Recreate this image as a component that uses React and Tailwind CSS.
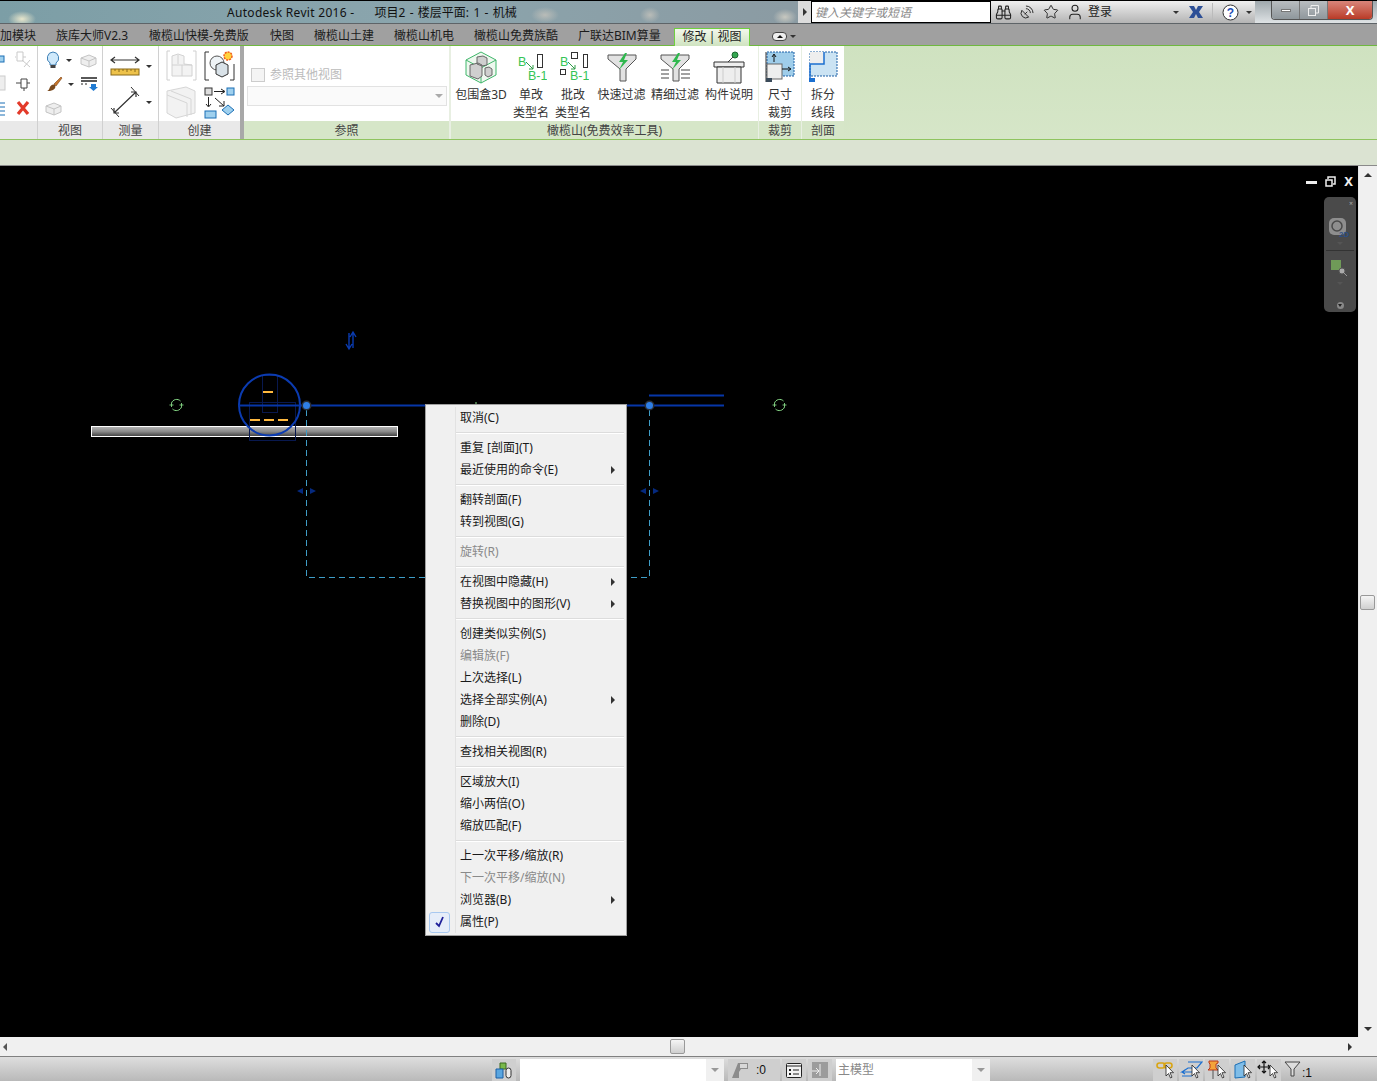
import { Binoculars, SatelliteDish, Star, User } from 'lucide-react';

const TABS = [
  { t: '加模块', w: 36 },
  { t: '族库大师V2.3', w: 73 },
  { t: '橄榄山快模-免费版', w: 101 },
  { t: '快图', w: 24 },
  { t: '橄榄山土建', w: 60 },
  { t: '橄榄山机电', w: 60 },
  { t: '橄榄山免费族酷', w: 84 },
  { t: '广联达BIM算量', w: 84 },
];

const MENU = [
  { t: '取消(C)' },
  null,
  { t: '重复 [剖面](T)' },
  { t: '最近使用的命令(E)', sub: true },
  null,
  { t: '翻转剖面(F)' },
  { t: '转到视图(G)' },
  null,
  { t: '旋转(R)', off: true },
  null,
  { t: '在视图中隐藏(H)', sub: true },
  { t: '替换视图中的图形(V)', sub: true },
  null,
  { t: '创建类似实例(S)' },
  { t: '编辑族(F)', off: true },
  { t: '上次选择(L)' },
  { t: '选择全部实例(A)', sub: true },
  { t: '删除(D)' },
  null,
  { t: '查找相关视图(R)' },
  null,
  { t: '区域放大(I)' },
  { t: '缩小两倍(O)' },
  { t: '缩放匹配(F)' },
  null,
  { t: '上一次平移/缩放(R)' },
  { t: '下一次平移/缩放(N)', off: true },
  { t: '浏览器(B)', sub: true },
  { t: '属性(P)', checked: true },
];

function Caret({ className = '' }) {
  return <span className={`w-0 h-0 border-x-[3px] border-x-transparent border-t-[3px] border-t-[#333] ${className}`} />;
}

function Bulb() {
  return (
    <svg width="16" height="18" viewBox="0 0 16 18">
      <path d="M8 1a6 6 0 0 0-3 11v2h6v-2A6 6 0 0 0 8 1z" fill="#cfe9fb" stroke="#3d7fb5" />
      <rect x="5.500" y="14" width="5" height="3" fill="#444" />
    </svg>
  );
}

function Brush() {
  return (
    <svg width="18" height="16" viewBox="0 0 18 16">
      <path d="M9 8 16 1l1 1-6 8z" fill="#c9772a" stroke="#7a4315" strokeWidth=".6" />
      <path d="M1 15c3 0 3-2 4-4s3-3 5-2c1 2 0 4-2 5s-4 1-7 1z" fill="#7a4a1e" />
    </svg>
  );
}

function GrayBox({ w = 17, h = 16 }) {
  return (
    <svg width={w} height={h} viewBox="0 0 17 16">
      <path d="M1 6 9 3l7 3v6l-7 3-8-3z" fill="#eee" stroke="#c4c4c4" />
      <path d="M1 6l8 3 7-3M9 9v6" fill="none" stroke="#c4c4c4" />
    </svg>
  );
}

function PanelOneIcons() {
  return (
    <div className="w-[37px] h-[75px] grid grid-cols-[15px_22px] grid-rows-[25px_25px_25px] items-center overflow-hidden">
      <svg width="6" height="20" viewBox="0 0 6 20"><rect x="-3" y="7" width="7" height="6" fill="#9fd0ee" stroke="#1b6fb5" /></svg>
      <svg width="17" height="20" viewBox="0 0 17 20"><path d="M2 3h6v9H2zM1 8H0M8 8h3M7 11l8 7M15 11l-6 7" fill="none" stroke="#c9c9c9" /></svg>
      <svg width="6" height="22" viewBox="0 0 6 22"><rect x="-3" y="3" width="8" height="14" fill="#eee" stroke="#ccc" /></svg>
      <svg width="17" height="20" viewBox="0 0 17 20"><path d="M6 5h6v9H6zM1 9h5M12 9h3M9 14v3" fill="none" stroke="#444" /></svg>
      <svg width="6" height="20" viewBox="0 0 6 20"><path d="M0 4h5M0 8h5M0 12h5M0 16h5" stroke="#1b6fb5" /></svg>
      <svg width="17" height="20" viewBox="0 0 17 20"><path d="M3 3l10 12M13 3 3 15" stroke="#e33a2a" strokeWidth="3.2" /></svg>
    </div>
  );
}

function ViewIcons() {
  return (
    <div className="w-[64px] h-[75px] grid grid-cols-[35px_22px] grid-rows-[24px_24px_24px] items-center pl-[7px] pt-[2px]">
      <div className="flex items-center gap-[5px]"><Bulb /><Caret /></div>
      <GrayBox />
      <div className="flex items-center gap-[5px]"><Brush /><Caret /></div>
      <svg width="18" height="18" viewBox="0 0 18 18">
        <path d="M1 3h16M1 6h16" stroke="#222" strokeWidth="1.3" />
        <path d="M1 9h8" stroke="#222" strokeDasharray="2 2" />
        <path d="M11 9h5v3h2l-4.500 4L9 12h2z" fill="#1f7ad1" />
      </svg>
      <GrayBox />
    </div>
  );
}

function MeasureIcons() {
  return (
    <div className="w-[55px] h-[75px] flex flex-col pl-[7px] pt-[9px] gap-[9px]">
      <div className="flex items-center gap-[6px]">
        <svg width="30" height="22" viewBox="0 0 30 22">
          <path d="M2 5h26M5 2 1 5l4 3M25 2l4 3-4 3" fill="none" stroke="#333" strokeWidth="1.200" />
          <rect x="1" y="14" width="28" height="6" fill="#eec24a" stroke="#8a6a1a" />
          <path d="M5 14v2M9 14v3M13 14v2M17 14v3M21 14v2M25 14v3" stroke="#8a6a1a" />
        </svg>
        <Caret />
      </div>
      <div className="flex items-center gap-[6px]">
        <svg width="30" height="32" viewBox="0 0 30 32">
          <path d="M4 27 26 6M21 6h5v5M4 22v5h5" fill="none" stroke="#333" strokeWidth="1.200" />
          <path d="M21 1l8 9M1 22l8 9" stroke="#333" />
        </svg>
        <Caret />
      </div>
    </div>
  );
}

function CreateIcons() {
  return (
    <div className="w-[81px] h-[75px] grid grid-cols-[38px_31px] grid-rows-[35px_34px] gap-y-[1px] pl-[7px] pt-[4px]">
      <svg width="31" height="31" viewBox="0 0 31 31">
        <path d="M4 1H1v29h3M27 1h3v29h-3" fill="none" stroke="#cfcfcf" />
        <path d="M6 14V6l6-2 6 2v8l8 1v11H6z" fill="#f3f3f3" stroke="#d2d2d2" />
        <path d="M6 15h20M16 15v11M12 5v9" stroke="#d2d2d2" />
      </svg>
      <svg width="31" height="31" viewBox="0 0 31 31">
        <path d="M5 2H1v28h4M26 30h4V14" fill="none" stroke="#333" />
        <circle cx="13" cy="13" r="7" fill="#eef3f6" stroke="#555" />
        <path d="M12 15l6-3 6 3v9l-6 3-6-3z" fill="#d9e2e8" stroke="#333" />
        <circle cx="24" cy="6" r="4" fill="#ffd23c" stroke="#f05a1c" strokeWidth="1.500" strokeDasharray="2 1" />
      </svg>
      <svg width="31" height="33" viewBox="0 0 31 33">
        <path d="M1 5 20 1l9 4v22L10 32 1 27z" fill="#f2f2f2" stroke="#d6d6d6" />
        <path d="M1 9l20 8v14M5 5l20 8v16" fill="none" stroke="#d6d6d6" />
      </svg>
      <svg width="31" height="33" viewBox="0 0 31 33">
        <rect x="1" y="2" width="7" height="7" fill="#ddd" stroke="#333" />
        <path d="M10 5.500h10M17 3l4 2.500L17 8" fill="none" stroke="#222" />
        <rect x="23" y="2" width="7" height="7" fill="#9fd0ee" stroke="#1b6fb5" />
        <path d="M4.500 11v9M2 18l2.500 3L7 18" fill="none" stroke="#222" />
        <path d="M11 12l9 8M20 15v5h-5" fill="none" stroke="#222" />
        <rect x="1" y="25" width="11" height="7" fill="#9fd0ee" stroke="#1b6fb5" />
        <path d="M24 19l6 5-6 5-6-5z" fill="#9fd0ee" stroke="#1b6fb5" />
      </svg>
    </div>
  );
}

function BoxIcon() {
  return (
    <svg width="32" height="33" viewBox="0 0 32 33">
      <path d="M16 1l15 8v15l-15 8-15-8V9z" fill="#eef8ef" stroke="#3fb66a" />
      <path d="M1 9l15 8 15-8M16 17v15" fill="none" stroke="#3fb66a" />
      <path d="M5 14l8-2 4 2v11l-4 3-8-3zM12 6l6-1 4 2v7l-5 1-5-2zM20 17l4-1 3 2v6l-4 2-3-2z" fill="#cfcfcf" stroke="#666" />
    </svg>
  );
}

function RenameIcon({ batch }) {
  return (
    <svg width="32" height="33" viewBox="0 0 32 33">
      <text x="3" y="15" fontSize="12.500" fill="#35c455" fontFamily="Liberation Sans">B</text>
      <path d="M11 11l7 7M14 18h4v-4" fill="none" stroke="#2d9a45" />
      <rect x={batch ? 26.5 : 22.5} y="3.500" width={batch ? 4 : 5} height="13" fill="#fff" stroke="#333" />
      {batch && <rect x="14.500" y="1.500" width="6" height="6" fill="#fff" stroke="#333" />}
      {batch && <rect x="3.500" y="18.500" width="5" height="5" fill="#fff" stroke="#333" />}
      <text x="13" y="29" fontSize="12.500" fill="#35c455" fontFamily="Liberation Sans">B-1</text>
    </svg>
  );
}

function FunnelIcon({ lines }) {
  return (
    <svg width="30" height="30" viewBox="0 0 30 30">
      <path d="M1 3h28v4L19 17v12h-6V17L1 7z" fill="#e2e2e2" stroke="#555" />
      <path d="M18 1l-6 9h4l-4 8 9-10h-4l3-7z" fill="#2fb84e" />
      {lines && <path d="M1 18h8M1 22h8M1 26h8M21 18h9M21 22h9M21 26h9" stroke="#444" />}
    </svg>
  );
}

function PodiumIcon() {
  return (
    <svg width="32" height="33" viewBox="0 0 32 33">
      <circle cx="22" cy="4" r="3" fill="#36a852" stroke="#1c6a30" />
      <path d="M20 6l-6 6" stroke="#444" />
      <path d="M1 11h30v5H1z" fill="#eee" stroke="#333" />
      <path d="M4 16h24v16H4z" fill="#eee" stroke="#333" />
      <path d="M10 16v16M22 16v16" stroke="#ccc" />
    </svg>
  );
}

function CropIcon() {
  return (
    <svg width="30" height="32" viewBox="0 0 30 32">
      <rect x="2" y="1" width="27" height="24" fill="#9fcdea" stroke="#1b5fa5" strokeDasharray="2 1" />
      <rect x="2" y="13" width="15" height="15" fill="#eee" stroke="#666" />
      <path d="M9 11V4M7 6l2-3 2 3M17 18h8M23 16l3 2-3 2" fill="none" stroke="#111" />
      <path d="M1 1v30" stroke="#333" />
      <rect x="1" y="27" width="6" height="4" fill="#3a4a5a" />
    </svg>
  );
}

function SplitIcon() {
  return (
    <svg width="30" height="32" viewBox="0 0 30 32">
      <path d="M2 1h27v24H2z" fill="#cbe3f3" stroke="#1b5fa5" strokeDasharray="2 1" />
      <path d="M2 1h14v12H2z" fill="#eee" />
      <path d="M16 1v12H2v17" fill="none" stroke="#1b6fd0" strokeWidth="1.500" />
      <rect x="1" y="27" width="6" height="4" fill="#1b6fd0" />
    </svg>
  );
}

function BigButton({ w, icon, lines }) {
  return (
    <div className="flex flex-col items-center pt-[3px]" style={{ width: w }}>
      <div className="h-[36px] shrink-0 flex items-center justify-center">{icon}</div>
      <div className="shrink-0 mt-[1px] flex flex-col items-center leading-[18px] text-[#333] whitespace-nowrap">
        {lines.map(l => <span key={l}>{l}</span>)}
      </div>
    </div>
  );
}

function Panel({ w, label, green, children }) {
  return (
    <div className="flex flex-col h-[93px]" style={{ width: w }}>
      <div className="h-[75px] flex bg-white overflow-hidden">{children}</div>
      <div className={`h-[18px] pt-[1px] leading-[18px] text-center text-[#444] ${green ? 'bg-[#d6e6c8]' : 'bg-[#e9e9e9]'}`}>{label}</div>
    </div>
  );
}

function TitleBar() {
  return (
    <div className="h-[24px] flex border-b border-[#5e6468] border-t border-t-black bg-[radial-gradient(ellipse_14px_8px_at_22px_18px,#e8e6cc,transparent),radial-gradient(ellipse_14px_8px_at_545px_14px,#b9bcb8,transparent),radial-gradient(ellipse_10px_8px_at_650px_14px,#b9bcb8,transparent),radial-gradient(ellipse_12px_8px_at_785px_16px,#c8c8c0,transparent),linear-gradient(90deg,#7c9ea6_0%,#8ba5ad_30%,#8b9aa2_60%,#6d7b88_100%)]">
      <div className="w-[798px] pl-[227px] pt-[1px] flex items-center text-[#111] gap-[20px] whitespace-nowrap">
        <span className="tracking-[0.3px]">Autodesk Revit 2016 -</span>
        <span className="[word-spacing:1.2px]">项目2 - 楼层平面: 1 - 机械</span>
      </div>
      <div className="w-[13px] bg-[#dcdcdc] flex items-center justify-center">
        <span className="w-0 h-0 border-y-[4px] border-y-transparent border-l-[4px] border-l-[#333]" />
      </div>
      <div className="w-[180px] bg-white border border-black pl-[3px] pt-[1px] flex items-center italic text-[#888] whitespace-nowrap">键入关键字或短语</div>
      <div className="w-[264px] flex items-center pl-[4px] bg-gradient-to-b from-[#f0f0f0] to-[#b4b4b4] text-[#222]">
        <Binoculars size={17} strokeWidth={1.5} />
        <SatelliteDish size={16} strokeWidth={1.4} className="ml-[7px]" />
        <Star size={16} strokeWidth={1.4} className="ml-[8px]" />
        <User size={18} strokeWidth={1.4} className="ml-[7px]" />
        <span className="ml-[4px]">登录</span>
        <Caret className="ml-[61px]" />
        <svg className="ml-[9px]" width="16" height="14" viewBox="0 0 16 14">
          <path d="M1 1h5l2 4 2-4h5l-4 6 4 6h-5L8 9l-2 4H1l4-6z" fill="#2d4f96" />
        </svg>
        <span className="ml-[8px] w-px h-[18px] bg-[#bbb]" />
        <svg className="ml-[9px]" width="17" height="17" viewBox="0 0 17 17">
          <circle cx="8.500" cy="8.500" r="7.500" fill="#fff" stroke="#333" />
          <text x="8.500" y="13" fontSize="12" fontWeight="700" textAnchor="middle" fill="#1f4fb5" fontFamily="Liberation Sans">?</text>
        </svg>
        <Caret className="ml-[7px]" />
      </div>
      <div className="flex-1 pl-[16px] bg-gradient-to-b from-[#9fa8ad] to-[#dfe3e5]">
        <div className="w-[102px] h-[19px] flex rounded-b-[4px] border border-t-0 border-[#555] overflow-hidden">
          <div className="w-[28px] flex items-center justify-center bg-gradient-to-b from-[#b9bdc0] to-[#8f979c] border-r border-[#777]"><span className="w-[10px] h-[3px] bg-white border border-[#777]" /></div>
          <div className="w-[28px] flex items-center justify-center bg-gradient-to-b from-[#b9bdc0] to-[#8f979c] border-r border-[#777]">
            <svg width="11" height="11" viewBox="0 0 11 11"><path d="M3 3V.5h7.500V8H8" fill="none" stroke="#eee" /><rect x=".5" y="3.500" width="7" height="7" fill="none" stroke="#eee" /></svg>
          </div>
          <div className="flex-1 flex items-center justify-center bg-gradient-to-b from-[#d8857a] to-[#b93a26] text-white font-bold text-[13px] leading-none">X</div>
        </div>
      </div>
    </div>
  );
}

function TabRow() {
  return (
    <div className="h-[22px] flex items-end bg-[#a0a0a0] border-b border-[#6fb83f] whitespace-nowrap text-[#1c1c1c]">
      <div className="flex gap-[20px] h-[21px] pt-[2px] items-center">
        {TABS.map(tab => <span key={tab.t} style={{ width: tab.w }}>{tab.t}</span>)}
      </div>
      <div className="ml-[12px] w-[76px] h-[18px] mb-[-1px] text-center leading-[16px] [word-spacing:-1px] border border-b-0 border-[#6fd03f] bg-gradient-to-b from-[#f3f8ec] to-[#cfe3c0]">修改 | 视图</div>
      <div className="ml-[22px] mb-[4px] flex items-center gap-[3px]">
        <span className="w-[15px] h-[9px] rounded-[4px] bg-[#eee] border border-[#444] flex items-center justify-center">
          <span className="w-0 h-0 border-x-[3px] border-x-transparent border-b-[3px] border-b-[#111]" />
        </span>
        <Caret />
      </div>
    </div>
  );
}

function Ribbon() {
  return (
    <div className="h-[93px] flex bg-gradient-to-b from-[#cfe2c0] to-[#d6e6c8]">
      <Panel w={37} label=""><PanelOneIcons /></Panel>
      <div className="w-px bg-[#d0d0d0]" />
      <Panel w={64} label="视图"><ViewIcons /></Panel>
      <div className="w-px bg-[#d0d0d0]" />
      <Panel w={55} label="测量"><MeasureIcons /></Panel>
      <div className="w-px bg-[#d0d0d0]" />
      <Panel w={81} label="创建"><CreateIcons /></Panel>
      <div className="w-[4px] bg-[#a8a8a8]" />
      <Panel w={205} label="参照" green>
        <div className="w-full pt-[21px] pl-[3px] pr-[2px]">
          <div className="flex items-center pl-[4px] h-[16px] gap-[5px] text-[#bbb]">
            <span className="w-[14px] h-[14px] border border-[#ccc] bg-[#f4f4f4]" />
            <span>参照其他视图</span>
          </div>
          <div className="mt-[3px] h-[20px] border border-[#e2e2e2] bg-[#fafafa] flex items-center justify-end pr-[3px]">
            <span className="w-0 h-0 border-x-[4px] border-x-transparent border-t-[4px] border-t-[#aaa]" />
          </div>
        </div>
      </Panel>
      <div className="w-[2px] bg-[#e8efe2]" />
      <Panel w={307} label="橄榄山(免费效率工具)" green>
        <BigButton w={60} icon={<BoxIcon />} lines={['包围盒3D']} />
        <BigButton w={40} icon={<RenameIcon />} lines={['单改', '类型名']} />
        <BigButton w={44} icon={<RenameIcon batch />} lines={['批改', '类型名']} />
        <BigButton w={53} icon={<FunnelIcon />} lines={['快速过滤']} />
        <BigButton w={54} icon={<FunnelIcon lines />} lines={['精细过滤']} />
        <BigButton w={54} icon={<PodiumIcon />} lines={['构件说明']} />
      </Panel>
      <div className="w-px bg-[#e8efe2]" />
      <Panel w={42} label="裁剪" green>
        <BigButton w={42} icon={<CropIcon />} lines={['尺寸', '裁剪']} />
      </Panel>
      <div className="w-px bg-[#e8efe2]" />
      <Panel w={42} label="剖面" green>
        <BigButton w={42} icon={<SplitIcon />} lines={['拆分', '线段']} />
      </Panel>
    </div>
  );
}

function Rotate({ x, y }) {
  return (
    <g transform={`translate(${x} ${y})`} fill="none" stroke="#86d886">
      <path d="M-5-2a5.500 5.500 0 0 1 9-2M5 2a5.500 5.500 0 0 1-9 2" />
      <path d="M-7 0h4M-5-2v4M3 0h4M5-2v4" strokeWidth=".9" />
    </g>
  );
}

function Sketch() {
  return (
    <svg className="absolute left-0 top-0" width="1358" height="871" viewBox="0 166 1358 871">
      <defs>
        <linearGradient id="wall" x1="0" y1="0" x2="0" y2="1">
          <stop offset="0" stopColor="#b4b4b4" />
          <stop offset="0.5" stopColor="#8a8a8a" />
          <stop offset="1" stopColor="#3c3c3c" />
        </linearGradient>
      </defs>
      <rect x="91.500" y="426.500" width="306" height="10" fill="url(#wall)" stroke="#fff" />
      <rect x="262.500" y="375.500" width="15" height="37" fill="none" stroke="#08184e" />
      <rect x="249.500" y="402.500" width="46" height="38" fill="none" stroke="#08184e" />
      <circle cx="269.500" cy="405" r="30.500" fill="none" stroke="#0b3bb0" strokeWidth="2" />
      <path d="M238 405.500H724M649 395.500h75" stroke="#0636a8" strokeWidth="2" />
      <path d="M263 392h10M250 420h10M264 420h10M278 420h10" stroke="#ffb93f" strokeWidth="2" />
      <path d="M306.500 410V577.500H426M649.500 410V577.500H627" fill="none" stroke="#3f9dc6" strokeDasharray="6 4" />
      <circle cx="306.500" cy="405.500" r="5" fill="#2a2f38" />
      <circle cx="306.500" cy="405.500" r="3.500" fill="#2f7fe6" />
      <circle cx="649.500" cy="405.500" r="5" fill="#2a2f38" />
      <circle cx="649.500" cy="405.500" r="3.500" fill="#2f7fe6" />
      <path d="M303 488v6l-6-3zM310 488v6l6-3zM646 488v6l-6-3zM653 488v6l6-3z" fill="#05297e" />
      <path d="M349 333v15M346 344l3 5 3-5M353 348v-15M350 337l3-5 3 5" fill="none" stroke="#0a3bb0" strokeWidth="1.400" />
      <path d="M476 404v-2" stroke="#86d886" />
      <Rotate x={176.500} y={405} />
      <Rotate x={779.500} y={405} />
    </svg>
  );
}

function ViewControls() {
  return (
    <div className="absolute right-[2px] top-[7px] flex flex-col items-end">
      <div className="flex items-center gap-[8px] pr-[3px] h-[16px]">
        <span className="w-[11px] h-[3px] bg-[#eee] mt-[3px]" />
        <svg width="11" height="11" viewBox="0 0 11 11"><path d="M3 3V1h7v7H8" fill="none" stroke="#eee" strokeWidth="1.500" /><rect x="1" y="4" width="6" height="6" fill="none" stroke="#eee" strokeWidth="1.500" /></svg>
        <span className="text-[#eee] font-bold text-[13px] leading-none">X</span>
      </div>
      <div className="w-[32px] h-[115px] mt-[8px] rounded-[5px] bg-[#4a4a4a] flex flex-col items-center pt-[3px] text-[#aaa]">
        <span className="self-end pr-[3px] text-[7px] leading-[8px]">×</span>
        <svg className="mt-[9px]" width="24" height="22" viewBox="0 0 24 22">
          <rect x="1" y="1" width="17" height="17" rx="5" fill="#8e8e8e" />
          <circle cx="9" cy="9" r="5" fill="none" stroke="#4a4a4a" strokeWidth="1.500" />
          <text x="11" y="20" fontSize="8" fontWeight="700" fill="#2c4f86" fontFamily="Liberation Sans">2D</text>
        </svg>
        <span className="mt-[3px] w-0 h-0 border-x-[3px] border-x-transparent border-t-[3px] border-t-[#555]" />
        <span className="mt-[5px] w-[28px] h-px bg-[#333]" />
        <svg className="mt-[9px]" width="18" height="18" viewBox="0 0 18 18">
          <rect x="0" y="0" width="10" height="10" fill="#6f9a58" />
          <circle cx="11" cy="11" r="3" fill="#aaa" stroke="#555" />
          <path d="M13 13l3 3" stroke="#999" />
        </svg>
        <span className="mt-[4px] w-0 h-0 border-x-[3px] border-x-transparent border-t-[3px] border-t-[#555]" />
        <span className="mt-auto mb-[3px] w-[7px] h-[7px] rounded-full bg-[#888] flex items-center justify-center">
          <span className="w-0 h-0 border-x-[2px] border-x-transparent border-t-[3px] border-t-[#222]" />
        </span>
      </div>
    </div>
  );
}

function ContextMenu() {
  return (
    <div className="absolute left-[425px] top-[238px] w-[202px] py-[2px] border border-[#a0a0a0] bg-[#f0f0f0] text-[12px] text-[#1a1a1a]">
      {MENU.map((m, i) =>
        m === null ? (
          <div key={i} className="h-[8px] flex">
            <div className="w-[30px] h-full border-r border-[#e2e2e2]" />
            <div className="flex-1 mt-[3px] mr-[2px] h-[2px] bg-[#dcdcdc] border-b border-white" />
          </div>
        ) : (
          <div key={i} className="h-[22px] flex">
            <div className="w-[30px] h-full border-r border-[#e2e2e2] flex items-center pl-[3px]">
              {m.checked && (
                <span className="w-[21px] h-[21px] rounded-[3px] border border-[#a8c8f0] bg-[#e6edf9] flex items-center justify-center">
                  <svg width="10" height="12" viewBox="0 0 10 12"><path d="M1 7l3 3 4-9" fill="none" stroke="#20209a" strokeWidth="1.800" /></svg>
                </span>
              )}
            </div>
            <div className={`flex-1 pl-[4px] pr-[11px] flex items-center justify-between ${m.off ? 'text-[#8a8a8a]' : ''}`}>
              <span>{m.t}</span>
              {m.sub && <span className="w-0 h-0 border-y-[4px] border-y-transparent border-l-[4px] border-l-[#333]" />}
            </div>
          </div>
        )
      )}
    </div>
  );
}

function VScroll() {
  return (
    <div className="w-[19px] bg-[#f0f0f0] flex flex-col items-center border-l border-[#e6e6e6]">
      <span className="mt-[7px] w-0 h-0 border-x-[4px] border-x-transparent border-b-[4px] border-b-[#333]" />
      <div className="mt-[418px] mr-[2px] w-[15px] h-[15px] border border-[#999] rounded-[2px] bg-gradient-to-b from-[#f5f5f5] to-[#cfcfcf]" />
      <span className="mt-auto mb-[6px] w-0 h-0 border-x-[4px] border-x-transparent border-t-[4px] border-t-[#333]" />
    </div>
  );
}

function HScroll() {
  return (
    <div className="h-[20px] flex items-center bg-[#f0f0f0] border-b border-[#808080] pl-[3px]">
      <span className="w-0 h-0 border-y-[4px] border-y-transparent border-r-[4px] border-r-[#555]" />
      <div className="ml-[663px] w-[15px] h-[15px] border border-[#999] rounded-[2px] bg-gradient-to-b from-[#f5f5f5] to-[#cfcfcf]" />
      <span className="ml-[663px] w-0 h-0 border-y-[4px] border-y-transparent border-l-[4px] border-l-[#333]" />
    </div>
  );
}

function StatusBox({ w, className = '', children }) {
  return <div className={`h-[22px] flex items-center justify-center bg-[#cfcfcf] ${className}`} style={{ width: w }}>{children}</div>;
}

function Combo({ w, text }) {
  return (
    <div className="h-[22px] flex bg-white" style={{ width: w }}>
      <div className="flex-1 pl-[2px] flex items-center text-[#888]">{text}</div>
      <div className="w-[18px] bg-[#f0f0f0] flex items-center justify-center">
        <span className="w-0 h-0 border-x-[4px] border-x-transparent border-t-[4px] border-t-[#999]" />
      </div>
    </div>
  );
}

function Pointer() {
  return <path d="M13 6v11l2.500-2.500 2 4.500 1.500-.8-2-4.500h3.500z" fill="#fff" stroke="#222" strokeWidth=".8" />;
}

function StatusBar() {
  return (
    <div className="h-[24px] flex items-end pl-[492px] bg-gradient-to-b from-[#dedede] to-[#b9b9b9]">
      <StatusBox w={24}>
        <svg width="18" height="17" viewBox="0 0 18 17">
          <path d="M5 1h6v6H5z" fill="#79b84a" stroke="#3a6a20" />
          <path d="M1 7h7v9H1z" fill="#5aa6e0" stroke="#1b5fa5" />
          <rect x="11" y="6" width="5" height="10" rx="2.500" fill="#eee" stroke="#333" />
        </svg>
      </StatusBox>
      <div className="ml-[4px]"><Combo w={204} /></div>
      <StatusBox w={52} className="ml-[4px] gap-[8px] justify-start pl-[4px]">
        <svg width="16" height="17" viewBox="0 0 16 17">
          <path d="M6 1h10v6H9l-2 3v6H0z" fill="#8c8c8c" />
          <path d="M8 2h7v4H8z" fill="#d8d8d8" />
        </svg>
        <span className="text-[#111] font-['Liberation_Sans',sans-serif]">:0</span>
      </StatusBox>
      <StatusBox w={24} className="ml-[2px]">
        <svg width="16" height="15" viewBox="0 0 16 15">
          <rect x=".5" y=".5" width="15" height="14" rx="1" fill="#f4f4f4" stroke="#222" />
          <path d="M1 3h14" stroke="#222" />
          <path d="M3 6h2v2H3zM3 10h2v2H3z" fill="#222" />
          <path d="M7 7h6M7 11h6" stroke="#222" />
        </svg>
      </StatusBox>
      <StatusBox w={24} className="ml-[2px]">
        <svg width="16" height="16" viewBox="0 0 16 16">
          <rect width="16" height="16" fill="#9c9c9c" />
          <path d="M0 9h7M4 6l3 3-3 3M8 2v12" fill="none" stroke="#eee" />
        </svg>
      </StatusBox>
      <div className="ml-[4px]"><Combo w={154} text="主模型" /></div>
      <div className="ml-[163px] flex gap-[2px]">
        <StatusBox w={24}>
          <svg width="24" height="22" viewBox="0 0 24 22">
            <rect x="4" y="4" width="8" height="5" rx="2.500" fill="none" stroke="#d9a514" strokeWidth="1.600" />
            <rect x="11" y="4" width="8" height="5" rx="2.500" fill="none" stroke="#d9a514" strokeWidth="1.600" />
            <Pointer />
          </svg>
        </StatusBox>
        <StatusBox w={24}>
          <svg width="24" height="22" viewBox="0 0 24 22">
            <path d="M9 3h14l-5 6H9l-6 4h10M3 13l3-2M3 13l3 2M3 17h10" fill="none" stroke="#1b6fd0" strokeWidth="1.200" />
            <Pointer />
          </svg>
        </StatusBox>
        <StatusBox w={24}>
          <svg width="24" height="22" viewBox="0 0 24 22">
            <path d="M4 2h9v2l-2 1v4l2 2H3l2-2V5L4 4z" fill="#f3a33a" stroke="#b9381f" />
            <path d="M8 11v9" stroke="#555" />
            <Pointer />
          </svg>
        </StatusBox>
        <StatusBox w={24}>
          <svg width="24" height="22" viewBox="0 0 24 22">
            <path d="M4 6l10-4v16l-10 1z" fill="#7fbde8" stroke="#1b6fb5" />
            <Pointer />
          </svg>
        </StatusBox>
        <StatusBox w={24}>
          <svg width="24" height="22" viewBox="0 0 24 22">
            <path d="M7 2v12M1 8h12M5 4l2-2 2 2M5 12l2 2 2-2M3 6 1 8l2 2M11 6l2 2-2 2" fill="none" stroke="#111" strokeWidth="1.200" />
            <Pointer />
          </svg>
        </StatusBox>
      </div>
      <div className="ml-[3px] h-[22px] flex items-end text-[#111]">
        <svg width="17" height="16" viewBox="0 0 17 16" className="mb-[4px]">
          <path d="M1 1h15L10 8v7H7V8z" fill="#ddd" stroke="#444" />
        </svg>
        <span className="font-['Liberation_Sans',sans-serif] leading-[15px] ml-[1px]">:1</span>
      </div>
    </div>
  );
}

export default function App() {
  return (
    <div className="w-[1377px] h-[1081px] overflow-hidden flex flex-col bg-black text-[12px] font-['Noto_Sans','Noto_Sans_CJK_SC',sans-serif]">
      <TitleBar />
      <TabRow />
      <Ribbon />
      <div className="h-[27px] bg-[#dbe3d2] border-t border-[#8fc45f] border-b border-b-[#8a8a8a]" />
      <div className="flex-1 flex min-h-0">
        <div className="flex-1 relative bg-black">
          <Sketch />
          <ViewControls />
          <ContextMenu />
        </div>
        <VScroll />
      </div>
      <HScroll />
      <StatusBar />
    </div>
  );
}
